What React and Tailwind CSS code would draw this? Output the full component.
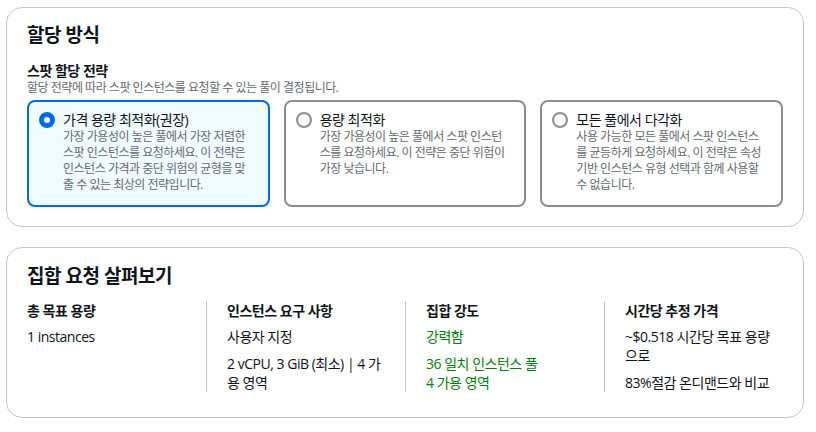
import React from 'react';

const font = { fontFamily: '"Open Sans", "Noto Sans CJK KR", sans-serif' };

const strategies = [
  {
    id: 'price',
    title: '가격 용량 최적화(권장)',
    lines: ['가장 가용성이 높은 풀에서 가장 저렴한', '스팟 인스턴스를 요청하세요. 이 전략은', '인스턴스 가격과 중단 위험의 균형을 맞', '출 수 있는 최상의 전략입니다.'],
  },
  {
    id: 'capacity',
    title: '용량 최적화',
    lines: ['가장 가용성이 높은 풀에서 스팟 인스턴', '스를 요청하세요. 이 전략은 중단 위험이', '가장 낮습니다.'],
  },
  {
    id: 'diversified',
    title: '모든 풀에서 다각화',
    lines: ['사용 가능한 모든 풀에서 스팟 인스턴스', '를 균등하게 요청하세요. 이 전략은 속성', '기반 인스턴스 유형 선택과 함께 사용할', '수 없습니다.'],
  },
];

function Radio({ checked }) {
  if (checked) {
    return <span className="mt-[1px] h-4 w-4 shrink-0 rounded-full border-[5px] border-[#006ce0] bg-white" />;
  }
  return <span className="mt-[1px] h-4 w-4 shrink-0 rounded-full border-2 border-[#8c8c94] bg-white" />;
}

function Tile({ item, checked }) {
  return (
    <div
      className={`flex gap-[8px] rounded-lg border-2 px-[10px] pt-[9px] pb-[12px] ${
        checked ? 'border-[#006ce0] bg-[#f0fbff]' : 'border-[#8c8c94] bg-white'
      }`}
    >
      <Radio checked={checked} />
      <div className="min-w-0">
        <div className="text-[14px] leading-[18px] text-[#0f141a]">{item.title}</div>
        <div className="text-[12px] leading-[16px] text-[#656871]">
          {item.lines.map((l) => (
            <div key={l} className="whitespace-nowrap">{l}</div>
          ))}
        </div>
      </div>
    </div>
  );
}

function Column({ label, first, children }) {
  return (
    <div className={`px-5 ${first ? '' : 'border-l border-[#c6c6cd]'}`}>
      <div className="text-[14px] font-bold leading-[20px] text-[#0f141a]">{label}</div>
      <div className="mt-[6px] flex flex-col gap-[8px] text-[14px] leading-[19px]">{children}</div>
    </div>
  );
}

export default function App() {
  return (
    <div className="min-h-[432px] bg-white pl-[6px] pr-[12px] pt-[7px] tracking-[-0.03em]" style={font}>
      {/* Allocation strategy */}
      <section className="rounded-2xl border border-[#c6c6cd] px-5 pt-[14px] pb-[19px]">
        <h2 className="text-[19px] font-bold leading-[26px] text-[#0f141a]">할당 방식</h2>
        <div className="mt-[14px]">
          <div className="text-[14px] font-bold leading-[18px] text-[#0f141a]">스팟 할당 전략</div>
          <div className="text-[12px] leading-[16px] text-[#656871]">할당 전략에 따라 스팟 인스턴스를 요청할 수 있는 풀이 결정됩니다.</div>
        </div>
        <div className="mt-[4px] grid grid-cols-3 gap-[14px]">
          {strategies.map((s, i) => (
            <Tile key={s.id} item={s} checked={i === 0} />
          ))}
        </div>
      </section>

      {/* Review */}
      <section className="mt-[20px] rounded-2xl border border-[#c6c6cd] pt-[15px] pb-[25px]">
        <h2 className="px-5 text-[19px] font-bold leading-[26px] text-[#0f141a]">집합 요청 살펴보기</h2>
        <div className="mt-[12px] grid grid-cols-4">
          <Column label="총 목표 용량" first>
            <div className="text-[#0f141a]">1 instances</div>
          </Column>
          <Column label="인스턴스 요구 사항">
            <div className="text-[#0f141a]">사용자 지정</div>
            <div className="text-[#0f141a]">
              2 vCPU, 3 GiB (최소) | 4 가<br />용 영역
            </div>
          </Column>
          <Column label="집합 강도">
            <div className="text-[#037f0c]">강력함</div>
            <div className="text-[#037f0c]">
              36 일치 인스턴스 풀<br />4 가용 영역
            </div>
          </Column>
          <Column label="시간당 추정 가격">
            <div className="text-[#0f141a]">
              ~$0.518 시간당 목표 용량<br />으로
            </div>
            <div className="text-[#0f141a]">83%절감 온디맨드와 비교</div>
          </Column>
        </div>
      </section>
    </div>
  );
}
